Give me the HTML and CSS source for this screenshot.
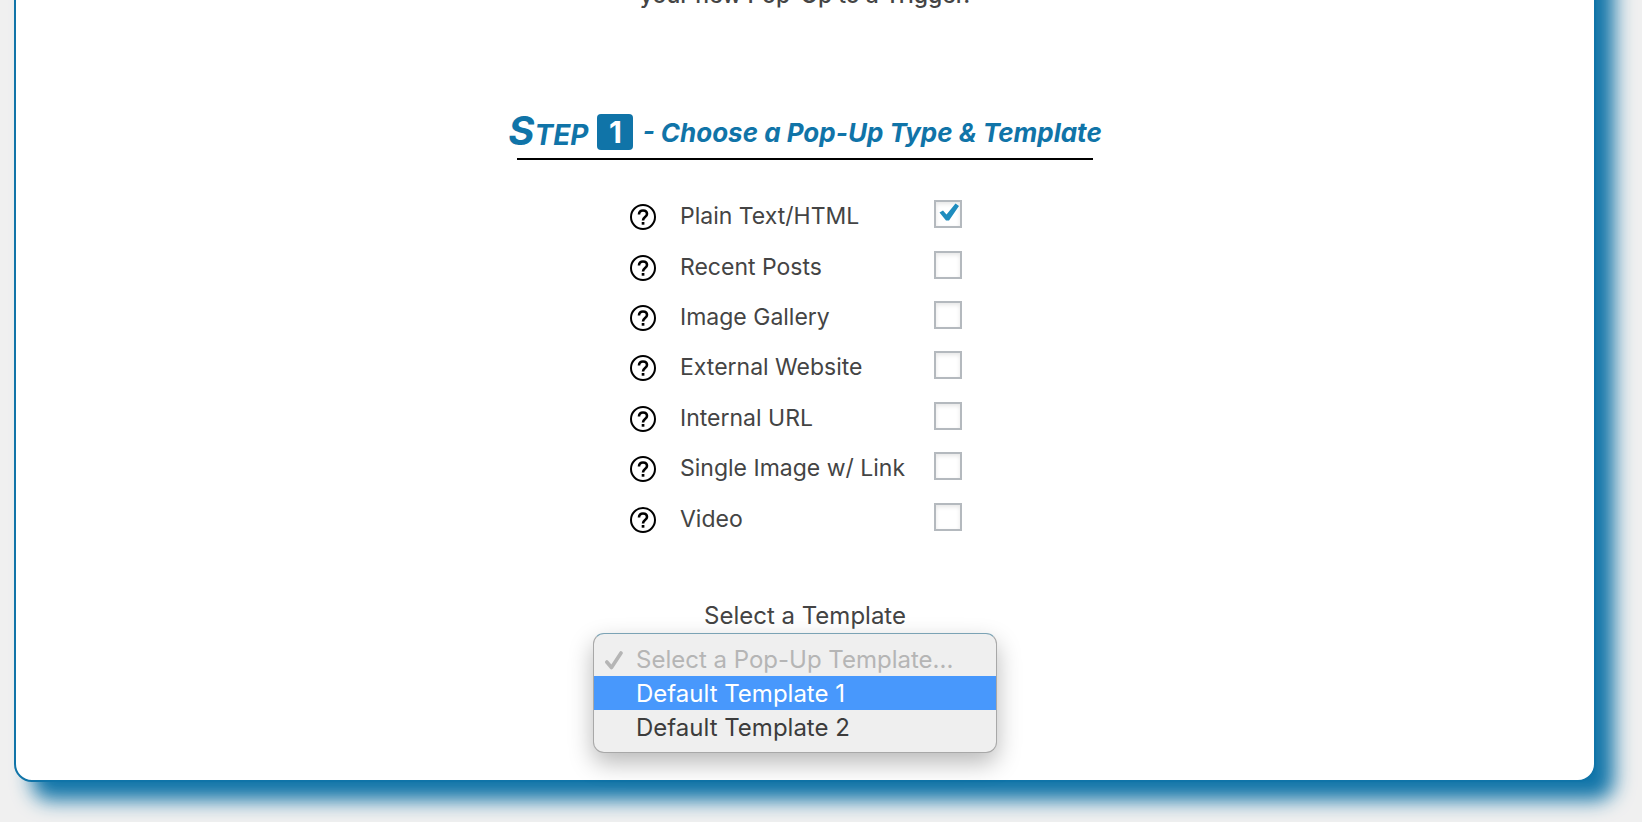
FILE: index.html
```html
<!DOCTYPE html>
<html lang="en">
<head>
<meta charset="utf-8">
<title>Create a Pop-Up</title>
<link rel="stylesheet" href="styles.css">
</head>
<body>
<svg class="sprite" aria-hidden="true">
  <symbol id="help" viewBox="0 0 26 26">
    <circle cx="13" cy="13" r="12" fill="none" stroke="#000" stroke-width="2"/>
    <path d="M9 10.400C9 7.900 10.600 6.500 13 6.500s4 1.400 4 3.500c0 3.100-4 3.100-4 6.400" fill="none" stroke="#000" stroke-width="2.600"/>
    <rect x="11.700" y="18" width="2.700" height="2.700"/>
  </symbol>
</svg>
<main class="card">
  <p class="intro">your new Pop-Up to a Trigger.</p>

  <h2 class="step">
    <span class="step-word">Step</span>
    <span class="step-number">1</span>
    <span class="step-title">- Choose a Pop-Up Type &amp; Template</span>
  </h2>

  <form class="form">
    <div class="types">
      <div class="type"><svg class="help"><use href="#help"/></svg><label for="t1">Plain Text/HTML</label><span class="box"><input type="checkbox" id="t1" checked><svg class="tick" viewBox="0 0 20 20"><path d="M0.500 9.500L4 7.500 7.500 11.500 16.500 0.500 20 3 10 17.500H7z"/></svg></span></div>
      <div class="type"><svg class="help"><use href="#help"/></svg><label for="t2">Recent Posts</label><span class="box"><input type="checkbox" id="t2"></span></div>
      <div class="type"><svg class="help"><use href="#help"/></svg><label for="t3">Image Gallery</label><span class="box"><input type="checkbox" id="t3"></span></div>
      <div class="type"><svg class="help"><use href="#help"/></svg><label for="t4">External Website</label><span class="box"><input type="checkbox" id="t4"></span></div>
      <div class="type"><svg class="help"><use href="#help"/></svg><label for="t5">Internal URL</label><span class="box"><input type="checkbox" id="t5"></span></div>
      <div class="type"><svg class="help"><use href="#help"/></svg><label for="t6">Single Image w/ Link</label><span class="box"><input type="checkbox" id="t6"></span></div>
      <div class="type"><svg class="help"><use href="#help"/></svg><label for="t7">Video</label><span class="box"><input type="checkbox" id="t7"></span></div>
    </div>

    <label class="template-label" for="template">Select a Template</label>
    <div class="menu">
      <select id="template" class="menu-list" size="3">
        <option class="placeholder" disabled>Select a Pop-Up Template...</option>
        <option class="active">Default Template 1</option>
        <option>Default Template 2</option>
      </select>
      <svg class="menu-check" viewBox="0 0 18 19" aria-hidden="true"><path d="M1.800 11L6.500 16.500 16 2" fill="none" stroke="#b5b5b5" stroke-width="3.600" stroke-linecap="round" stroke-linejoin="round"/></svg>
    </div>
  </form>
</main>
</body>
</html>
```
FILE: styles.css
```css
* {
  box-sizing: border-box;
}

body {
  margin: 0;
  overflow: hidden;
  background: #f0f0f0;
  color: #444;
  font-family: Inter, "Liberation Sans", sans-serif;
  font-size: 23px;
}

.sprite {
  position: absolute;
  width: 0;
  height: 0;
}

.card {
  display: flex;
  flex-direction: column;
  align-items: center;
  margin: -60px 46px 40px 14px;
  padding: 33px 0 27px;
  background: #fff;
  border: 2px solid #1074a8;
  border-radius: 18px;
  box-shadow: 18px 18px 20px #1074a8;
}

.intro {
  margin: 0 0 93px;
  font-weight: 500;
  line-height: 40px;
  white-space: nowrap;
}

.step {
  display: flex;
  justify-content: center;
  align-items: center;
  gap: 9px;
  width: 576px;
  height: 52px;
  margin: 0;
  border-bottom: 2px solid #000;
  color: #1074a8;
  font-size: 26px;
  font-style: italic;
  line-height: 50px;
  white-space: nowrap;
}

.step-word {
  font-size: 28px;
  text-transform: uppercase;
}

.step-word::first-letter {
  font-size: 40px;
}

.step-number {
  flex: none;
  width: 36px;
  height: 36px;
  margin-bottom: 2px;
  border-radius: 4px;
  background: #1074a8;
  color: #fff;
  font-size: 30px;
  font-style: normal;
  line-height: 36px;
  text-align: center;
}

.form {
  display: flex;
  flex-direction: column;
  align-items: center;
}

.types {
  display: grid;
  grid-auto-rows: 1fr;
  width: 332px;
  height: 353px;
  margin: 29px 18px 0 0;
}

.type {
  display: grid;
  grid-template-columns: 50px 1fr 28px;
  align-items: center;
  white-space: nowrap;
}

.type label {
  padding-top: 4px;
}

.help {
  width: 26px;
  height: 26px;
  margin-top: 6px;
}

.box {
  position: relative;
  height: 28px;
}

.box input {
  appearance: none;
  display: block;
  width: 28px;
  height: 28px;
  margin: 0;
  border: 2px solid #b4b9be;
  background: #fff;
  box-shadow: inset 0 2px 4px rgba(0, 0, 0, 0.1);
}

.tick {
  position: absolute;
  top: 3px;
  left: 5px;
  width: 20px;
  height: 20px;
  fill: #1e8cbe;
}

.template-label {
  margin-top: 57px;
  font-size: 24px;
  line-height: 34px;
}

.menu {
  position: relative;
  width: 404px;
  margin-right: 20px;
}

.menu-list {
  appearance: none;
  display: block;
  width: 100%;
  height: 120px;
  padding: 8px 0;
  overflow: hidden;
  border: 1px solid #a8a8a8;
  border-top-color: #7ba3b5;
  border-radius: 11px;
  outline: none;
  background: #efefef;
  box-shadow: 0 10px 24px rgba(0, 0, 0, 0.28);
  color: #3c3c3c;
  font: inherit;
  font-size: 24px;
}

.menu-list option {
  height: 34px;
  padding: 3px 0 0 42px;
}

.menu-list .placeholder {
  color: #b5b5b5;
}

.menu-list .active {
  background: #4898fc;
  color: #fff;
}

.menu-check {
  position: absolute;
  top: 18px;
  left: 12px;
  width: 18px;
  height: 19px;
}
```
